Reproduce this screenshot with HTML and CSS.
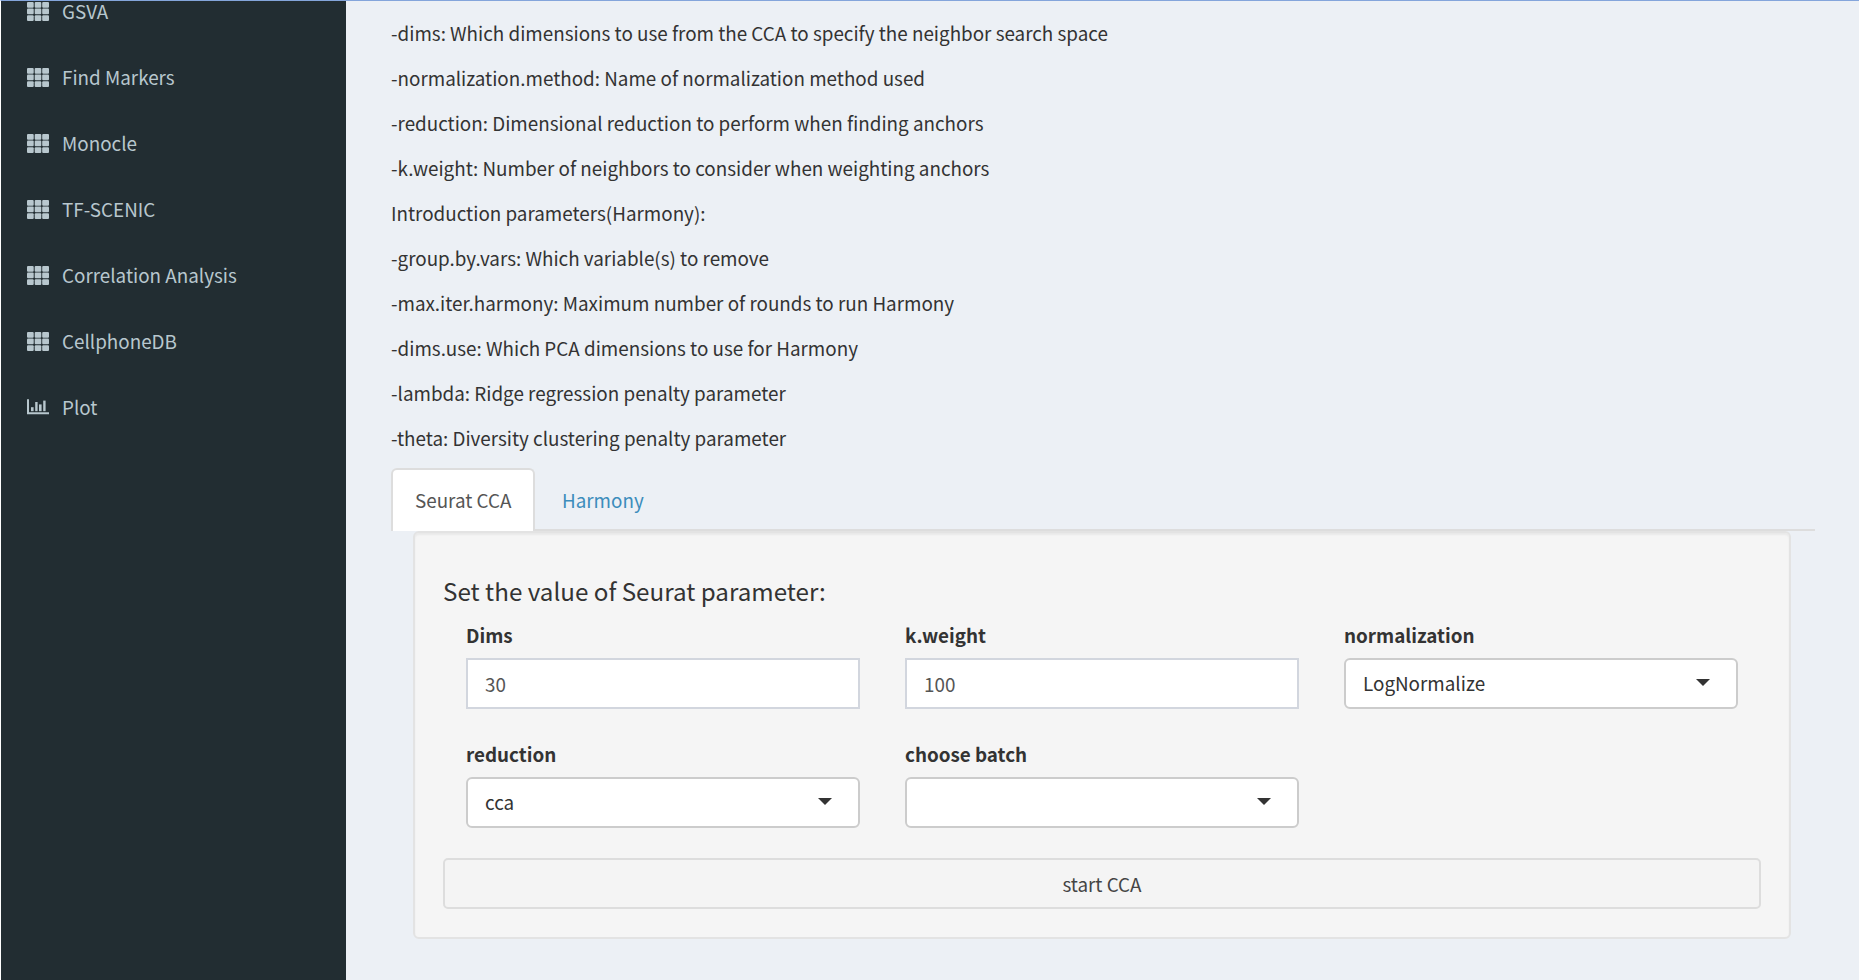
FILE: index.html
```html
<!DOCTYPE html>
<html lang="en">
<head>
<meta charset="utf-8">
<title>Seurat CCA</title>
<link rel="stylesheet" href="styles.css">
</head>
<body>
<svg class="defs" width="0" height="0">
  <symbol id="th" viewBox="0 0 22 20">
    <rect x="0" y="0" width="6.7" height="5.7" rx="1"/><rect x="7.7" y="0" width="6.6" height="5.7" rx="1"/><rect x="15.2" y="0" width="6.8" height="5.7" rx="1"/>
    <rect x="0" y="6.6" width="6.7" height="5.7" rx="1"/><rect x="7.7" y="6.6" width="6.6" height="5.7" rx="1"/><rect x="15.2" y="6.6" width="6.8" height="5.7" rx="1"/>
    <rect x="0" y="13.2" width="6.7" height="5.7" rx="1"/><rect x="7.7" y="13.2" width="6.6" height="5.7" rx="1"/><rect x="15.2" y="13.2" width="6.8" height="5.7" rx="1"/>
  </symbol>
  <symbol id="chart" viewBox="0 0 22 20">
    <path d="M0 1.3h2v13h20v2H0z"/><rect x="4" y="9.2" width="2.6" height="4"/><rect x="8.2" y="4" width="2.4" height="9.2"/><rect x="12" y="6.4" width="2.6" height="6.8"/><rect x="16.2" y="2.6" width="2.4" height="10.6"/>
  </symbol>
</svg>
<div class="window">
  <nav class="sidebar">
    <a class="item"><svg class="icon"><use href="#th"/></svg><span>GSVA</span></a>
    <a class="item"><svg class="icon"><use href="#th"/></svg><span>Find Markers</span></a>
    <a class="item"><svg class="icon"><use href="#th"/></svg><span>Monocle</span></a>
    <a class="item"><svg class="icon"><use href="#th"/></svg><span>TF-SCENIC</span></a>
    <a class="item"><svg class="icon"><use href="#th"/></svg><span>Correlation Analysis</span></a>
    <a class="item"><svg class="icon"><use href="#th"/></svg><span>CellphoneDB</span></a>
    <a class="item"><svg class="icon"><use href="#chart"/></svg><span>Plot</span></a>
  </nav>
  <main class="content">
    <div class="intro">
      <p>-dims: Which dimensions to use from the CCA to specify the neighbor search space</p>
      <p>-normalization.method: Name of normalization method used</p>
      <p>-reduction: Dimensional reduction to perform when finding anchors</p>
      <p>-k.weight: Number of neighbors to consider when weighting anchors</p>
      <p>Introduction parameters(Harmony):</p>
      <p>-group.by.vars: Which variable(s) to remove</p>
      <p>-max.iter.harmony: Maximum number of rounds to run Harmony</p>
      <p>-dims.use: Which PCA dimensions to use for Harmony</p>
      <p>-lambda: Ridge regression penalty parameter</p>
      <p>-theta: Diversity clustering penalty parameter</p>
    </div>
    <div class="tabs">
      <a class="tab active">Seurat CCA</a>
      <a class="tab">Harmony</a>
    </div>
    <section class="well">
      <h4 class="title">Set the value of Seurat parameter:</h4>
      <div class="fields">
        <div class="field"><label class="label">Dims</label><div class="input">30</div></div>
        <div class="field"><label class="label">k.weight</label><div class="input">100</div></div>
        <div class="field"><label class="label">normalization</label><div class="select"><span>LogNormalize</span><i class="caret"></i></div></div>
        <div class="field"><label class="label">reduction</label><div class="select"><span>cca</span><i class="caret"></i></div></div>
        <div class="field"><label class="label">choose batch</label><div class="select"><span></span><i class="caret"></i></div></div>
      </div>
      <button class="button">start CCA</button>
    </section>
  </main>
</div>
</body>
</html>
```
FILE: styles.css
```css
* { box-sizing: border-box; }
body {
  margin: 0;
  background: #ecf0f5;
  color: #333;
  font: 18.83px/30px "Noto Sans CJK SC", "Noto Sans", sans-serif;
  overflow: hidden;
}
.defs { display: block; }
.window {
  display: flex;
  height: 980px;
  border-top: 1px solid #84a5db;
  border-left: 1px solid #fff;
  overflow: hidden;
}
.sidebar {
  width: 345px;
  flex: none;
  margin-top: -22px;
  padding-bottom: 22px;
  height: 1002px;
  background: #222d32;
  color: #b8c7ce;
}
.item {
  display: flex;
  align-items: center;
  height: 66px;
  padding-left: 26px;
  gap: 13px;
}
.item span { padding-bottom: 2px; }
.icon { width: 22px; height: 20px; fill: #b8c7ce; }
.content { flex: 1; padding: 17px 44px 0 45px; }
.intro p { margin: 0 0 15px; height: 30px; white-space: nowrap; }
.tabs {
  display: flex;
  gap: 3px;
  height: 63px;
  border-bottom: 2px solid #ddd;
}
.tab {
  height: 63px;
  padding: 15px 22px 0;
  border: 2px solid transparent;
  border-bottom: 0;
  border-radius: 6px 6px 0 0;
  color: #3c8dbc;
  white-space: nowrap;
}
.tab.active {
  width: 144px;
  background: #fff;
  border-color: #ddd;
  color: #555;
}
.well {
  margin: 0 24px 0 22px;
  height: 408px;
  padding: 40px 28px 0;
  background: #f5f5f5;
  border: 2px solid #e3e3e3;
  border-radius: 6px;
  box-shadow: inset 0 2px 2px rgba(0, 0, 0, .05);
}
.title { margin: 0; font-size: 24.2px; font-weight: 400; line-height: 36px; }
.fields {
  display: grid;
  grid-template-columns: repeat(3, 394px);
  column-gap: 45px;
  row-gap: 30px;
  margin: 11px 0 30px 23px;
}
.field { height: 89px; }
.label { display: block; height: 38px; font-weight: 700; line-height: 30px; }
.input, .select {
  display: flex;
  align-items: center;
  justify-content: space-between;
  height: 51px;
  padding: 0 26px 0 17px;
  background: #fff;
  border: 2px solid #d2d6de;
}
.input { color: #555; }
.select { border-color: #ccc; border-radius: 6px; padding-bottom: 2px; }
.caret {
  border: 7.5px solid transparent;
  border-top-color: #333;
  border-bottom: 0;
}
.button {
  display: block;
  width: 1318px;
  height: 51px;
  padding: 0;
  background: #f4f4f4;
  border: 2px solid #ddd;
  border-radius: 5px;
  color: #444;
  font: inherit;
}
```
